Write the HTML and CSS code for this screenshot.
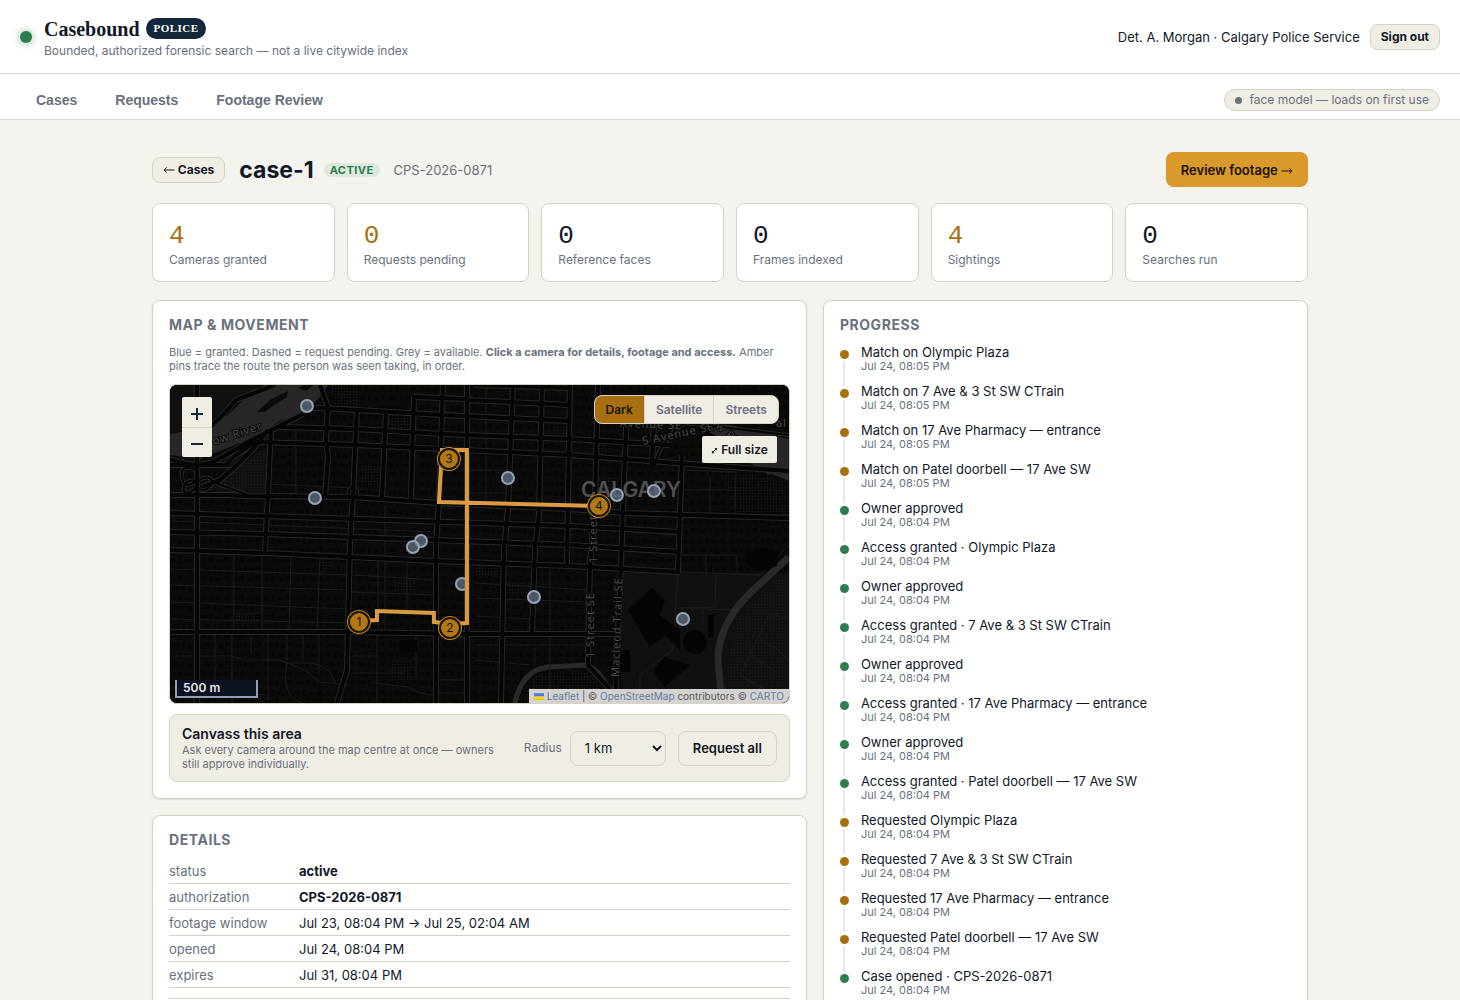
FILE: index.html
```html
<!DOCTYPE html>
<html lang="en">
<head>
<meta charset="utf-8">
<meta name="viewport" content="width=device-width, initial-scale=1">
<title>Casebound · case-1</title>
<link rel="stylesheet" href="styles.css">
</head>
<body>
<header class="topbar">
  <span class="live-dot"></span>
  <div class="brand">
    <div class="brand-name">Casebound <span class="brand-tag">Police</span></div>
    <div class="brand-sub">Bounded, authorized forensic search — not a live citywide index</div>
  </div>
  <span class="user">Det. A. Morgan · Calgary Police Service</span>
  <button class="btn btn-small" type="button">Sign out</button>
</header>
<nav class="tabs">
  <button class="tab" type="button">Cases</button>
  <button class="tab" type="button">Requests</button>
  <button class="tab" type="button">Footage Review</button>
  <span class="model-pill"><i class="model-dot"></i>face model — loads on first use</span>
</nav>
<main class="page">
  <div class="case-head">
    <button class="btn btn-small" type="button"><svg class="arrow" viewBox="0 0 12 8"><path d="M11.500 4H1M3.500 1.500L1 4l2.500 2.500"/></svg> Cases</button>
    <h1 class="case-title">case-1</h1>
    <span class="badge">Active</span>
    <span class="case-ref">CPS-2026-0871</span>
    <button class="btn-primary" type="button">Review footage <svg class="arrow" viewBox="0 0 12 8"><path d="M.5 4H11M8.500 1.500L11 4 8.500 6.500"/></svg></button>
  </div>
  <section class="stats">
    <div class="stat"><b class="num amber">4</b><span>Cameras granted</span></div>
    <div class="stat"><b class="num amber">0</b><span>Requests pending</span></div>
    <div class="stat"><b class="num">0</b><span>Reference faces</span></div>
    <div class="stat"><b class="num">0</b><span>Frames indexed</span></div>
    <div class="stat"><b class="num amber">4</b><span>Sightings</span></div>
    <div class="stat"><b class="num">0</b><span>Searches run</span></div>
  </section>
  <div class="columns">
    <div class="stack">
      <section class="panel">
        <h2 class="panel-title">Map &amp; movement</h2>
        <p class="hint">Blue = granted. Dashed = request pending. Grey = available. <b>Click a camera for details, footage and access.</b> Amber pins trace the route the person was seen taking, in order.</p>
        <div class="map">
          <svg class="map-art" viewBox="0 0 619 318" preserveAspectRatio="xMidYMid slice">
            <defs>
              <pattern id="lots" width="31" height="19" patternUnits="userSpaceOnUse">
                <path fill="#070707" d="M1 2h5v4H1zM8 1h4v6H8zM14 3h7v3h-7zM23 1h6v5h-6zM2 11h8v4H2zM12 10h3v6h-3zM18 12h4v5h-4zM25 10h4v4h-4z"/>
              </pattern>
              <pattern id="dots" width="3" height="3" patternUnits="userSpaceOnUse"><path fill="#1e1e1e" d="M0 0h1v1H0z"/></pattern>
              <g id="major">
                <path d="M27 0V318M101 44L98 108 95 167M150 0L158 22 156 55 158 72 155 112M187 25L183 112 180 160 177 285 167 318M216 28L212 113M244 12L241 114M273 0L269 118 266 160V318M297 0V318M343 0L338 125 334 165 331 318M372 0L369 130 365 165 362 248M400 0L397 180M428 0L425 120 420 180 418 280 441 305M457 20L453 125 451 180 445 318M485 20L482 80M512 70L510 130 508 187"/>
                <path d="M130 22L187 25 273 30 400 36M110 42L187 44 273 49 400 54 500 60M85 57L187 60 273 64 400 70 520 79 619 86M0 110H60Q80 112 98 111L183 112 269 118 400 124M400 124L455 128 619 133M0 128L95 131 400 141 510 147M0 147L95 149 400 160 510 167M0 165L95 168 266 176 400 181 510 187M0 247L177 247 297 249 445 249M297 15L400 20M244 12L297 14M305 0L400 3M33 47Q50 35 66 15L105 0"/>
                <path d="M0 74Q25 84 45 76 65 65 80 56L133 29M0 80L60 80Q50 80 85 57M98 45Q85 65 50 95L32 102"/>
              </g>
              <g id="loops"><path d="M27 85Q10 78 12 92T27 95Q12 95 14 107 24 110 27 97 38 88 43 97 38 108 27 104M43 97L78 110M179 112V105Q184 100 187 106V112M485 80Q490 55 515 38L619 50"/></g>
            </defs>
            <rect width="619" height="318" fill="#0b0b0b"/>
            <rect width="619" height="318" fill="url(#lots)"/>
            <path fill="#101010" d="M0 0H95L60 22 25 45 0 48zM30 105L100 60 97 110H75zM451 188H619V318H451z"/>
            <path fill="url(#dots)" d="M35 102L95 65V106H75zM160 0h28v23h-22zM190 80h18v22h-18zM216 29h25v14h-25zM65 227h25v10H65zM152 174h11v10h-11zM225 195h20v12h-20zM220 275h22v20h-22zM382 40h14v12h-14zM428 92h20v15h-20zM428 54h10v13h-10zM549 85L619 95V135H570zM305 180h24v12h-24zM337 198h20v12h-20zM555 290L570 230 619 185V318H552zM365 290L400 285 425 290 435 318H350z"/>
            <path fill="#272727" d="M0 49L25 44 58 30 80 9 95 0H158L150 12 132 30 110 36 85 52 60 62 30 74 0 70z"/>
            <path fill="#0b0b0b" d="M87 27L100 15 118 6 117 12 104 20 95 27zM128 3l6-3h10l-8 6z"/>
            <path fill="#272727" d="M522 37L560 40 619 54V96L585 82 560 61 545 50z"/>
            <path fill="none" stroke="#292929" stroke-width="7" d="M619 172Q600 190 580 208 548 240 548 275L552 318"/>
            <path fill="none" stroke="#292929" stroke-width="5" d="M345 318Q352 285 378 282L415 280Q430 284 438 304M585 85Q596 82 600 89"/>
            <path fill="none" stroke="#1d1d1d" d="M0 184L180 190M0 200L180 205M0 217L180 224M0 234L180 238M184 174L264 177M184 190L266 195M182 207L266 210M64 168V247M92 170V247M121 172L119 247M150 173L147 247M208 176V247M237 176V226M126 45V110M215 120V250M0 136L95 140 265 147M98 99L185 103M45 250V300M62 250V318M81 250V270M98 250V315M117 250V275M133 250V275M149 250V290M0 271L60 271 75 275 110 275 135 285 150 297 178 300M115 278H140Q160 280 165 298M117 278Q110 310 132 318M0 303L30 303 95 310M207 250V318M246 250V295M267 278H297M267 295H297M267 308H297M182 271H207M182 288H235M205 298L238 302Q250 310 267 310M300 108H340M300 85H338M316 0V115M380 184V318M305 198L418 205M305 213L418 217M305 231L360 234M305 260H418M305 275L360 280M365 263V280M510 170L567 170V190M510 187L590 190 619 160M536 170V190M546 190L545 222 508 223 561 225M508 187L503 265 470 290V318M533 225V240M512 85L566 87 565 130M540 90V130M512 105H560M600 228L570 290 585 300M605 230L619 235M590 255L606 263 619 275M583 272L603 285M570 290L619 318M455 145L505 150"/>
            <path fill="#050505" d="M458 225L482 202 495 215 490 230 510 245V265L495 250 480 262zM483 285L495 272 520 280 495 302zM576 170l15-8 18 5-2 14-18 5-12-7zM450 265h10v22h-10zM230 255h17v12h-17zM538 230h6v22h-6z"/>
            <circle cx="525" cy="257" r="12" fill="#050505"/>
            <g fill="none" stroke="#272727" stroke-width="6"><use href="#major"/></g>
            <g fill="none" stroke="#272727" stroke-width="4"><use href="#loops"/></g>
            <g fill="none" stroke="#050505" stroke-width="4"><use href="#major"/></g>
            <g fill="none" stroke="#050505" stroke-width="2"><use href="#loops"/></g>
            <g class="map-label">
              <text transform="translate(44 60) rotate(-18)">ow River</text>
              <text transform="translate(450 42) rotate(2)">Avenue SE</text>
              <text transform="translate(473 60) rotate(-12)">5 Avenue SE</text>
              <text transform="translate(545 42) rotate(42)">w River</text>
              <text x="606" y="42">al</text>
              <text transform="translate(427 178) rotate(-90)">1 Street SE</text>
              <text transform="translate(424 273) rotate(-90)">1 Street SE</text>
              <text transform="translate(449 292) rotate(-88)">Macleod Trail SE</text>
            </g>
            <text class="map-city" x="411" y="112">CALGARY</text>
            <g class="camera">
              <circle cx="137" cy="21" r="6"/><circle cx="145" cy="113" r="6"/><circle cx="338" cy="93" r="6"/><circle cx="447" cy="110" r="6"/><circle cx="484" cy="106" r="6"/><circle cx="251" cy="156" r="6"/><circle cx="243" cy="162" r="6"/><circle cx="292" cy="199" r="6"/><circle cx="364" cy="212" r="6"/><circle cx="513" cy="234" r="6"/>
            </g>
            <path class="route" d="M189 236L207 235V226L264 228V237L280 239 297 238V65H272L269 117 429 121"/>
            <g class="pin">
              <circle class="halo" cx="189" cy="237" r="11"/><circle cx="189" cy="237" r="10"/><text x="189" y="241">1</text>
              <circle class="halo" cx="280" cy="243" r="11"/><circle cx="280" cy="243" r="10"/><text x="280" y="247">2</text>
              <circle class="halo" cx="279" cy="74" r="11"/><circle cx="279" cy="74" r="10"/><text x="279" y="78">3</text>
              <circle class="halo" cx="429" cy="121" r="11"/><circle cx="429" cy="121" r="10"/><text x="429" y="125">4</text>
            </g>
          </svg>
          <div class="zoom">
            <button type="button" aria-label="Zoom in"><svg viewBox="0 0 12 12"><path d="M6 0v12M0 6h12"/></svg></button>
            <button type="button" aria-label="Zoom out"><svg viewBox="0 0 12 12"><path d="M0 6h12"/></svg></button>
          </div>
          <div class="layers">
            <button class="layer on" type="button">Dark</button><button class="layer" type="button">Satellite</button><button class="layer" type="button">Streets</button>
          </div>
          <button class="full" type="button"><svg viewBox="0 0 8 8"><path d="M2 6l4-4"/><path class="tip" d="M4 1h3v3zM1 4v3h3z"/></svg> Full size</button>
          <div class="scale">500 m</div>
          <div class="credit"><svg viewBox="0 0 12 8"><path fill="#4c7be1" d="M0 0h12v4H0z"/><path fill="#ffd500" d="M0 4h12v3H0z"/><path fill="#e0bc00" d="M0 7h12v1H0z"/></svg> <a href="#">Leaflet</a> | © <a href="#">OpenStreetMap</a> contributors © <a href="#">CARTO</a></div>
        </div>
        <div class="canvass">
          <div class="canvass-text"><div class="canvass-title">Canvass this area</div><div class="canvass-sub">Ask every camera around the map centre at once — owners still approve individually.</div></div>
          <label class="radius" for="radius">Radius</label>
          <select class="select" id="radius"><option>1 km</option><option>2 km</option></select>
          <button class="btn btn-request" type="button">Request all</button>
        </div>
      </section>
      <section class="panel">
        <h2 class="panel-title">Details</h2>
        <table class="details">
          <tr><th scope="row">status</th><td><b>active</b></td></tr>
          <tr><th scope="row">authorization</th><td><b>CPS-2026-0871</b></td></tr>
          <tr><th scope="row">footage window</th><td>Jul 23, 08:04 PM → Jul 25, 02:04 AM</td></tr>
          <tr><th scope="row">opened</th><td>Jul 24, 08:04 PM</td></tr>
          <tr><th scope="row">expires</th><td>Jul 31, 08:04 PM</td></tr>
          <tr class="blank"><td></td><td></td></tr>
        </table>
      </section>
    </div>
    <section class="panel">
      <h2 class="panel-title">Progress</h2>
      <ol class="timeline">
        <li class="event amber-dot">Match on Olympic Plaza<time>Jul 24, 08:05 PM</time></li>
        <li class="event amber-dot">Match on 7 Ave &amp; 3 St SW CTrain<time>Jul 24, 08:05 PM</time></li>
        <li class="event amber-dot">Match on 17 Ave Pharmacy — entrance<time>Jul 24, 08:05 PM</time></li>
        <li class="event amber-dot">Match on Patel doorbell — 17 Ave SW<time>Jul 24, 08:05 PM</time></li>
        <li class="event">Owner approved<time>Jul 24, 08:04 PM</time></li>
        <li class="event">Access granted · Olympic Plaza<time>Jul 24, 08:04 PM</time></li>
        <li class="event">Owner approved<time>Jul 24, 08:04 PM</time></li>
        <li class="event">Access granted · 7 Ave &amp; 3 St SW CTrain<time>Jul 24, 08:04 PM</time></li>
        <li class="event">Owner approved<time>Jul 24, 08:04 PM</time></li>
        <li class="event">Access granted · 17 Ave Pharmacy — entrance<time>Jul 24, 08:04 PM</time></li>
        <li class="event">Owner approved<time>Jul 24, 08:04 PM</time></li>
        <li class="event">Access granted · Patel doorbell — 17 Ave SW<time>Jul 24, 08:04 PM</time></li>
        <li class="event amber-dot">Requested Olympic Plaza<time>Jul 24, 08:04 PM</time></li>
        <li class="event amber-dot">Requested 7 Ave &amp; 3 St SW CTrain<time>Jul 24, 08:04 PM</time></li>
        <li class="event amber-dot">Requested 17 Ave Pharmacy — entrance<time>Jul 24, 08:04 PM</time></li>
        <li class="event amber-dot">Requested Patel doorbell — 17 Ave SW<time>Jul 24, 08:04 PM</time></li>
        <li class="event">Case opened · CPS-2026-0871<time>Jul 24, 08:04 PM</time></li>
      </ol>
    </section>
  </div>
</main>
</body>
</html>
```
FILE: styles.css
```css
:root {
  --ink: #111827;
  --muted: #69717d;
  --line: #d5d1c7;
  --soft: #f0ede4;
  --amber: #a86f10;
  --green: #2e7d4f;
}
* { box-sizing: border-box; }
html { overflow-x: hidden; }
body {
  margin: 0;
  background: #f5f3ee;
  color: var(--ink);
  font: 13px/20px Inter, sans-serif;
}
button, select { font-family: inherit; color: inherit; margin: 0; }

.topbar {
  display: flex;
  align-items: center;
  gap: 10px;
  height: 74px;
  padding: 0 20px;
  background: #fff;
  border-bottom: 1px solid #d4d4d1;
}
.live-dot {
  width: 12px;
  height: 12px;
  margin-right: 2px;
  border-radius: 50%;
  background: var(--green);
  box-shadow: 0 0 8px #2e7d4f99;
}
.brand { flex: 1; padding-top: 4px; }
.brand-name {
  display: flex;
  align-items: center;
  gap: 6px;
  font: 600 20px/24px "Liberation Serif", serif;
}
.brand-tag {
  padding: 0 8px;
  border-radius: 11px;
  background: #14283a;
  color: #fff;
  font-size: 11px;
  line-height: 21px;
  letter-spacing: 0.04em;
  text-transform: uppercase;
}
.brand-sub { font-size: 12px; line-height: 20px; color: var(--muted); }
.btn {
  border: 1px solid var(--line);
  border-radius: 8px;
  background: var(--soft);
  font-weight: 700;
}
.btn-small { height: 26px; padding: 0 10px; font-size: 12px; }
.arrow { width: 12px; height: 8px; fill: none; stroke: currentColor; }

.tabs {
  display: flex;
  align-items: center;
  gap: 6px;
  height: 46px;
  padding: 7px 20px 0;
  background: #fff;
  border-bottom: 1px solid #d4d4d1;
}
.tab {
  padding: 0 16px;
  border: 0;
  background: none;
  color: var(--muted);
  font: 700 14px/24px "Liberation Sans", sans-serif;
}
.model-pill {
  display: flex;
  align-items: center;
  gap: 7px;
  height: 22px;
  margin-left: auto;
  padding: 0 10px;
  border: 1px solid var(--line);
  border-radius: 11px;
  background: var(--soft);
  color: var(--muted);
  font-size: 12px;
}
.model-dot { width: 7px; height: 7px; border-radius: 50%; background: var(--muted); }

.page { max-width: 1180px; margin: 0 auto; padding: 32px 12px; }
.case-head { display: flex; align-items: center; margin-bottom: 16px; }
.case-title { margin: 0 10px 0 14px; font-size: 23px; line-height: 32px; font-weight: 700; }
.badge {
  padding: 0 6px;
  border-radius: 8px;
  background: #dce8dd;
  color: var(--green);
  font-size: 11px;
  line-height: 14px;
  font-weight: 700;
  letter-spacing: 0.04em;
  text-transform: uppercase;
}
.case-ref { margin-left: 14px; color: var(--muted); }
.btn-primary {
  height: 35px;
  margin-left: auto;
  padding: 0 15px;
  border: 0;
  border-radius: 8px;
  background: #d9992b;
  color: #1a1206;
  font-size: 13px;
  font-weight: 600;
}

.stats { display: grid; grid-template-columns: repeat(6, 1fr); gap: 12px; margin-bottom: 18px; }
.stat {
  display: flex;
  flex-direction: column;
  padding: 18px 16px 12px;
  border: 1px solid var(--line);
  border-radius: 8px;
  background: #fff;
  color: var(--muted);
  font-size: 12px;
  line-height: 19px;
}
.num { color: var(--ink); font: 400 26px/28px "Liberation Mono", monospace; }
.amber { color: var(--amber); }

.columns { display: grid; grid-template-columns: 1.35fr 1fr; gap: 16px; }
.stack { display: grid; gap: 16px; align-content: start; min-width: 0; }
.panel {
  padding: 16px;
  border: 1px solid var(--line);
  border-radius: 8px;
  background: #fff;
  box-shadow: 0 1px 2px #1118271a;
}
.panel-title {
  margin: 0 0 12px;
  color: var(--muted);
  font-size: 14px;
  line-height: 16px;
  font-weight: 700;
  letter-spacing: 0.04em;
  text-transform: uppercase;
}
.hint { margin: 0 0 11px; color: var(--muted); font-size: 11px; line-height: 14px; }

.map {
  position: relative;
  height: 320px;
  border: 1px solid var(--line);
  border-radius: 8px;
  overflow: hidden;
  background: #0d0d0d;
}
.map-art { display: block; width: 100%; height: 100%; }
.map-label { fill: #4b4b4b; stroke: #0a0a0a; stroke-width: 2px; paint-order: stroke; font: 11px "Open Sans", sans-serif; letter-spacing: 1px; }
.map-city { fill: #505050; font: 600 21px Inter, sans-serif; }
.camera { fill: #5f6b7acc; stroke: #94a3b8; stroke-width: 2px; }
.route { fill: none; stroke: #dc9a42; stroke-width: 4px; }
.pin { fill: #b07914; stroke: #1a1206; stroke-width: 2px; font: 12px Inter, sans-serif; text-anchor: middle; }
.pin .halo { stroke: #c48a20; }
.pin text { fill: #1a1206; stroke: none; }
.zoom { position: absolute; top: 12px; left: 12px; display: grid; width: 30px; border-radius: 2px; overflow: hidden; }
.zoom button { height: 30px; padding: 5px 0 0; border: 0; background: var(--soft); }
.zoom button + button { border-top: 1px solid var(--line); }
.zoom svg { width: 12px; height: 12px; stroke: #14283a; stroke-width: 2px; }
.layers {
  position: absolute;
  top: 10px;
  right: 10px;
  display: flex;
  border: 1px solid var(--line);
  border-radius: 8px;
  overflow: hidden;
  background: var(--soft);
}
.layer { height: 27px; padding: 0 11px; border: 0; background: none; color: var(--muted); font-size: 12px; font-weight: 600; }
.layer + .layer { border-left: 1px solid var(--line); }
.layer.on { background: var(--amber); color: #1a1206; }
.full {
  position: absolute;
  top: 51px;
  right: 12px;
  height: 27px;
  padding: 0 9px;
  border: 0;
  border-radius: 2px;
  background: var(--soft);
  font-size: 12px;
  font-weight: 600;
}
.full svg { width: 7px; height: 7px; stroke: currentColor; }
.full .tip { fill: currentColor; stroke: none; }
.scale {
  position: absolute;
  left: 5px;
  bottom: 5px;
  width: 83px;
  height: 18px;
  padding-left: 6px;
  border: 2px solid #8fa1b5;
  border-top: 0;
  background: #0c1220;
  color: #e5e7eb;
  font-size: 12px;
  line-height: 16px;
  font-weight: 600;
}
.credit {
  position: absolute;
  right: 0;
  bottom: 0;
  padding: 0 5px;
  background: #d3d2cf;
  color: #55585c;
  font-size: 10px;
  line-height: 14px;
}
.credit a { color: #5d7ba4; text-decoration: none; }
.credit svg { width: 10px; height: 7px; }

.canvass {
  display: flex;
  align-items: center;
  margin-top: 10px;
  padding: 10px 12px;
  border: 1px solid var(--line);
  border-radius: 8px;
  background: var(--soft);
}
.canvass-text { flex: 1; }
.canvass-title { font-size: 14px; line-height: 18px; font-weight: 600; }
.canvass-sub { max-width: 325px; color: var(--muted); font-size: 11px; line-height: 14px; }
.radius { margin-right: 8px; color: var(--muted); font-size: 12px; }
.select {
  width: 96px;
  height: 35px;
  margin-right: 12px;
  padding: 0 0 0 10px;
  border: 1px solid var(--line);
  border-radius: 8px;
  background: var(--soft);
  font-size: 13px;
}
.btn-request { height: 35px; padding: 0 14px; font-size: 13px; font-weight: 600; }

.details { width: 100%; margin-top: -2px; border-collapse: collapse; }
.details th, .details td { padding: 3px 0 2px; border-bottom: 1px solid var(--line); text-align: left; font-weight: 400; }
.details th { width: 130px; color: var(--muted); }
.details .blank td { padding: 5px 0; }

.timeline { margin: 0; padding: 0; list-style: none; }
.event { position: relative; height: 39px; padding-left: 21px; line-height: 15px; }
.event::before {
  content: "";
  position: absolute;
  left: 0;
  top: 5px;
  width: 9px;
  height: 9px;
  border-radius: 50%;
  background: var(--green);
}
.event::after { content: ""; position: absolute; left: 3px; top: 16px; width: 2px; height: 25px; background: #e9e7e2; }
.event:last-child::after { display: none; }
.amber-dot::before { background: var(--amber); }
.event time { display: block; color: var(--muted); font-size: 11px; line-height: 13px; }
```
